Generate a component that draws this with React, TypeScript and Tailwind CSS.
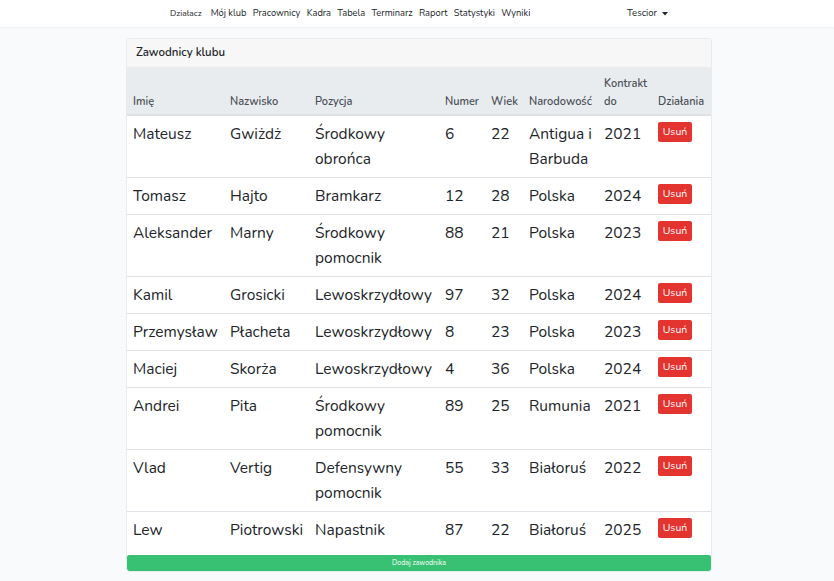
import React from "react"

interface Player {
  first: string
  last: string
  position: string[]
  number: number
  age: number
  nation: string[]
  contract: number
}

const players: Player[] = [
  { first: "Mateusz", last: "Gwiżdż", position: ["Środkowy", "obrońca"], number: 6, age: 22, nation: ["Antigua i", "Barbuda"], contract: 2021 },
  { first: "Tomasz", last: "Hajto", position: ["Bramkarz"], number: 12, age: 28, nation: ["Polska"], contract: 2024 },
  { first: "Aleksander", last: "Marny", position: ["Środkowy", "pomocnik"], number: 88, age: 21, nation: ["Polska"], contract: 2023 },
  { first: "Kamil", last: "Grosicki", position: ["Lewoskrzydłowy"], number: 97, age: 32, nation: ["Polska"], contract: 2024 },
  { first: "Przemysław", last: "Płacheta", position: ["Lewoskrzydłowy"], number: 8, age: 23, nation: ["Polska"], contract: 2023 },
  { first: "Maciej", last: "Skorża", position: ["Lewoskrzydłowy"], number: 4, age: 36, nation: ["Polska"], contract: 2024 },
  { first: "Andrei", last: "Pita", position: ["Środkowy", "pomocnik"], number: 89, age: 25, nation: ["Rumunia"], contract: 2021 },
  { first: "Vlad", last: "Vertig", position: ["Defensywny", "pomocnik"], number: 55, age: 33, nation: ["Białoruś"], contract: 2022 },
  { first: "Lew", last: "Piotrowski", position: ["Napastnik"], number: 87, age: 22, nation: ["Białoruś"], contract: 2025 },
]

const links = ["Mój klub", "Pracownicy", "Kadra", "Tabela", "Terminarz", "Raport", "Statystyki", "Wyniki"]

function Lines({ items }: { items: string[] }) {
  return (
    <>
      {items.map((t) => (
        <div key={t} className="whitespace-nowrap">{t}</div>
      ))}
    </>
  )
}

export default function App() {
  const cell = "align-top pl-[6px] pr-0 pt-[5px] pb-[6px] border-t border-[#dee2e6]"
  const th = "align-bottom text-left font-semibold pl-[6px] pr-0 pt-[7px] pb-[3px]"

  return (
    <div className="min-h-[581px] bg-[#f8fafc] text-[#212529] font-['Nunito','Lato',sans-serif]">
      <nav className="h-[27px] bg-white shadow-[0_1px_3px_rgba(0,0,0,0.05)] flex items-center pl-[170px] pr-[166px]">
        <span className="text-[8.5px] text-[#212529] mr-[9px]">Działacz</span>
        <div className="flex items-center gap-[6.3px] text-[9.3px] text-[#212529]">
          {links.map((l) => (
            <a key={l} className="whitespace-nowrap">{l}</a>
          ))}
        </div>
        <div className="ml-auto flex items-center text-[9.5px] text-[#212529]">
          Tescior
          <svg width="6" height="4" viewBox="0 0 6 4" className="ml-[5px]">
            <path d="M0 0H6L3 3.5Z" fill="#212529" />
          </svg>
        </div>
      </nav>

      <main className="pt-[11px] pl-[4px]">
        <div className="mx-auto w-[586px] bg-white border border-[#e9ecef] rounded-[3px] overflow-hidden">
          <div className="h-[29px] px-[9px] flex items-center bg-[#f7f7f7] border-b border-[#ececec] text-[11.5px] font-semibold text-[#212529]">
            Zawodnicy klubu
          </div>

          <table className="w-full table-fixed border-collapse">
            <colgroup>
              <col className="w-[97px]" />
              <col className="w-[85px]" />
              <col className="w-[130px]" />
              <col className="w-[46px]" />
              <col className="w-[38px]" />
              <col className="w-[75px]" />
              <col className="w-[54px]" />
              <col className="w-[59px]" />
            </colgroup>
            <thead className="bg-[#e9ecef] text-[11px] leading-[18px] text-[#495057]">
              <tr className="border-b-2 border-[#dee2e6]">
                <th className={th}>Imię</th>
                <th className={th}>Nazwisko</th>
                <th className={th}>Pozycja</th>
                <th className={th}>Numer</th>
                <th className={th}>Wiek</th>
                <th className={th}>Narodowość</th>
                <th className={th}>
                  <div>Kontrakt</div>
                  <div>do</div>
                </th>
                <th className={th}>Działania</th>
              </tr>
            </thead>
            <tbody className="text-[15.5px] leading-[25px] text-[#212529]">
              {players.map((p, i) => (
                <tr key={p.first} className={i === 0 ? "[&>td]:border-t-0" : ""}>
                  <td className={cell}>{p.first}</td>
                  <td className={cell}>{p.last}</td>
                  <td className={cell}><Lines items={p.position} /></td>
                  <td className={cell}>{p.number}</td>
                  <td className={cell}>{p.age}</td>
                  <td className={cell}><Lines items={p.nation} /></td>
                  <td className={cell}>{p.contract}</td>
                  <td className={cell}>
                    <button className="block mt-[1px] h-[20px] w-[34px] rounded-[2px] bg-[#e3342f] text-white text-[10.5px] leading-[20px]">
                      Usuń
                    </button>
                  </td>
                </tr>
              ))}
            </tbody>
          </table>

          <div className="pt-[7px]">
            <button className="block w-full h-[16px] rounded-[2px] bg-[#38c172] text-white text-[7px] leading-[16px]">
              Dodaj zawodnika
            </button>
          </div>
        </div>
      </main>
    </div>
  )
}
